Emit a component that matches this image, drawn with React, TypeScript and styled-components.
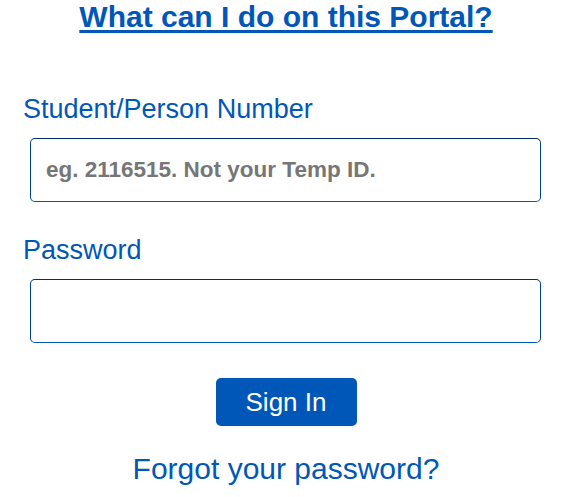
import React from 'react';
import styled, { createGlobalStyle } from 'styled-components';

const Global = createGlobalStyle`
  html, body {
    margin: 0;
    padding: 0;
    background: #fff;
  }
  body {
    font-family: "Liberation Sans", Arial, sans-serif;
  }
`;

const Page = styled.div`
  width: 587px;
  display: flex;
  flex-direction: column;
  padding: 0 38px 0 23px;
  box-sizing: border-box;
`;

const Title = styled.a`
  align-self: center;
  font-size: 30px;
  font-weight: 700;
  line-height: 34px;
  color: #0057b8;
  text-decoration: underline;
  text-decoration-thickness: 3px;
  text-underline-offset: 3px;
`;

const Form = styled.form`
  display: flex;
  flex-direction: column;
  margin-top: 61px;
`;

const Label = styled.label`
  font-size: 27px;
  line-height: 29px;
  color: #0057b8;
`;

const Field = styled.input`
  box-sizing: border-box;
  width: 511px;
  height: 64px;
  margin: 14px 0 34px 7px;
  padding: 0 15px;
  border: 1px solid #003f8f;
  border-top-color: #002f6c;
  border-bottom-color: #0057b8;
  border-radius: 5px;
  font-family: "Liberation Sans", Arial, sans-serif;
  font-size: 22.5px;
  font-weight: 700;
  color: #333;
  outline: none;

  &::placeholder {
    color: #767676;
    opacity: 1;
  }
`;

const Actions = styled.div`
  display: flex;
  flex-direction: column;
  align-items: center;
  margin-top: 1px;
`;

const SignIn = styled.button`
  width: 141px;
  height: 48px;
  border: none;
  border-radius: 5px;
  background: #0057b8;
  color: #fff;
  font-family: "Liberation Sans", Arial, sans-serif;
  font-size: 26px;
  cursor: pointer;
`;

const Forgot = styled.a`
  margin-top: 26px;
  font-size: 30px;
  line-height: 34px;
  color: #0057b8;
  text-decoration: none;
`;

export default function App() {
  return (
    <Page>
      <Global />
      <Title href="#">What can I do on this Portal?</Title>
      <Form onSubmit={(e) => e.preventDefault()}>
        <Label htmlFor="sid">Student/Person Number</Label>
        <Field id="sid" type="text" placeholder="eg. 2116515. Not your Temp ID." />
        <Label htmlFor="pwd">Password</Label>
        <Field id="pwd" type="password" />
        <Actions>
          <SignIn type="submit">Sign In</SignIn>
          <Forgot href="#">Forgot your password?</Forgot>
        </Actions>
      </Form>
    </Page>
  );
}
